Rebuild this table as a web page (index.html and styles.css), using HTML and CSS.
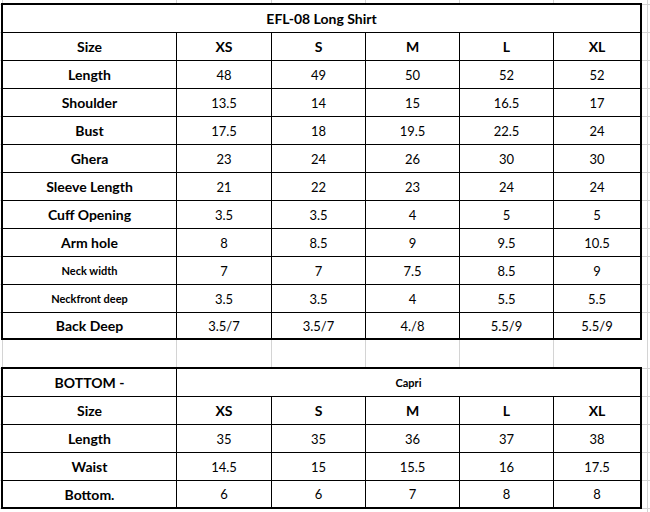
FILE: index.html
```html
<!DOCTYPE html>
<html>
<head>
<meta charset="utf-8">
<link rel="stylesheet" href="styles.css">
</head>
<body>
<div class="ghost top"><span></span><span></span><span></span><span></span><span></span><span></span><span></span></div>

<div class="sheet shirt">
  <div class="c span end title">EFL-08 Long Shirt</div>

  <div class="c lbl">Size</div><div class="c hd">XS</div><div class="c hd">S</div><div class="c hd">M</div><div class="c hd">L</div><div class="c hd end">XL</div>

  <div class="c lbl">Length</div><div class="c">48</div><div class="c">49</div><div class="c">50</div><div class="c">52</div><div class="c end">52</div>

  <div class="c lbl">Shoulder</div><div class="c">13.5</div><div class="c">14</div><div class="c">15</div><div class="c">16.5</div><div class="c end">17</div>

  <div class="c lbl">Bust</div><div class="c">17.5</div><div class="c">18</div><div class="c">19.5</div><div class="c">22.5</div><div class="c end">24</div>

  <div class="c lbl">Ghera</div><div class="c">23</div><div class="c">24</div><div class="c">26</div><div class="c">30</div><div class="c end">30</div>

  <div class="c lbl">Sleeve Length</div><div class="c">21</div><div class="c">22</div><div class="c">23</div><div class="c">24</div><div class="c end">24</div>

  <div class="c lbl">Cuff Opening</div><div class="c">3.5</div><div class="c">3.5</div><div class="c">4</div><div class="c">5</div><div class="c end">5</div>

  <div class="c lbl">Arm hole</div><div class="c">8</div><div class="c">8.5</div><div class="c">9</div><div class="c">9.5</div><div class="c end">10.5</div>

  <div class="c lbl small">Neck width</div><div class="c">7</div><div class="c">7</div><div class="c">7.5</div><div class="c">8.5</div><div class="c end">9</div>

  <div class="c lbl small">Neckfront deep</div><div class="c">3.5</div><div class="c">3.5</div><div class="c">4</div><div class="c">5.5</div><div class="c end">5.5</div>

  <div class="c lbl last">Back Deep</div><div class="c last">3.5/7</div><div class="c last">3.5/7</div><div class="c last">4./8</div><div class="c last">5.5/9</div><div class="c end last">5.5/9</div>
</div>

<div class="ghost gap"><span></span><span></span><span></span><span></span><span></span><span></span><span></span></div>

<div class="sheet bottom">
  <div class="c lbl">BOTTOM -</div><div class="c span5 end capri">Capri</div>

  <div class="c lbl">Size</div><div class="c hd">XS</div><div class="c hd">S</div><div class="c hd">M</div><div class="c hd">L</div><div class="c hd end">XL</div>

  <div class="c lbl">Length</div><div class="c">35</div><div class="c">35</div><div class="c">36</div><div class="c">37</div><div class="c end">38</div>

  <div class="c lbl">Waist</div><div class="c">14.5</div><div class="c">15</div><div class="c">15.5</div><div class="c">16</div><div class="c end">17.5</div>

  <div class="c lbl last">Bottom.</div><div class="c last">6</div><div class="c last">6</div><div class="c last">7</div><div class="c last">8</div><div class="c end last">8</div>
</div>
</body>
</html>
```

FILE: styles.css
```css
html, body {
  margin: 0;
  padding: 0;
}

body {
  width: 650px;
  height: 512px;
  overflow: hidden;
  font-family: Lato, "Open Sans", "Liberation Sans", sans-serif;
  color: #000;
  background-color: #fff;
  background-image:
    linear-gradient(to right, transparent 647px, #d4d4d4 647px, #d4d4d4 648px, transparent 648px),
    repeating-linear-gradient(to bottom, transparent 0, transparent 4px, #d4d4d4 4px, #d4d4d4 5px, transparent 5px, transparent 28px);
}

.ghost {
  display: flex;
  background: #fff;
}

.ghost span {
  box-sizing: border-box;
  border-right: 1px solid #d4d4d4;
  height: 100%;
}

.ghost span:nth-child(1) { width: 3px; }
.ghost span:nth-child(2) { width: 174px; }
.ghost span:nth-child(3) { width: 95px; }
.ghost span:nth-child(4) { width: 94px; }
.ghost span:nth-child(5) { width: 94px; }
.ghost span:nth-child(6) { width: 94px; }
.ghost span:nth-child(7) { width: 94px; }

.ghost.top { height: 3px; }
.ghost.gap { height: 27px; }

.sheet {
  display: grid;
  grid-template-columns: 174px 95px 94px 94px 94px 86px;
  width: 641px;
  box-sizing: border-box;
  margin-left: 1px;
  border: 2px solid #000;
  background: #fff;
}

.c {
  box-sizing: border-box;
  height: 28px;
  border-right: 1px solid #000;
  border-bottom: 1px solid #000;
  display: flex;
  align-items: center;
  justify-content: center;
  font-size: 13px;
  white-space: nowrap;
}

.c.end { border-right: 0; }

.c.last {
  border-bottom: 0;
  height: 25px;
}

.bottom .c.last { height: 26px; }

.span { grid-column: 1 / 7; }
.span5 { grid-column: 2 / 7; }

.title {
  font-weight: 700;
  font-size: 14px;
}

.lbl {
  font-weight: 700;
  font-size: 14px;
}

.lbl.small { font-size: 11px; }

.hd {
  font-weight: 700;
  font-size: 14px;
}

.capri {
  font-weight: 700;
  font-size: 11px;
}
```
